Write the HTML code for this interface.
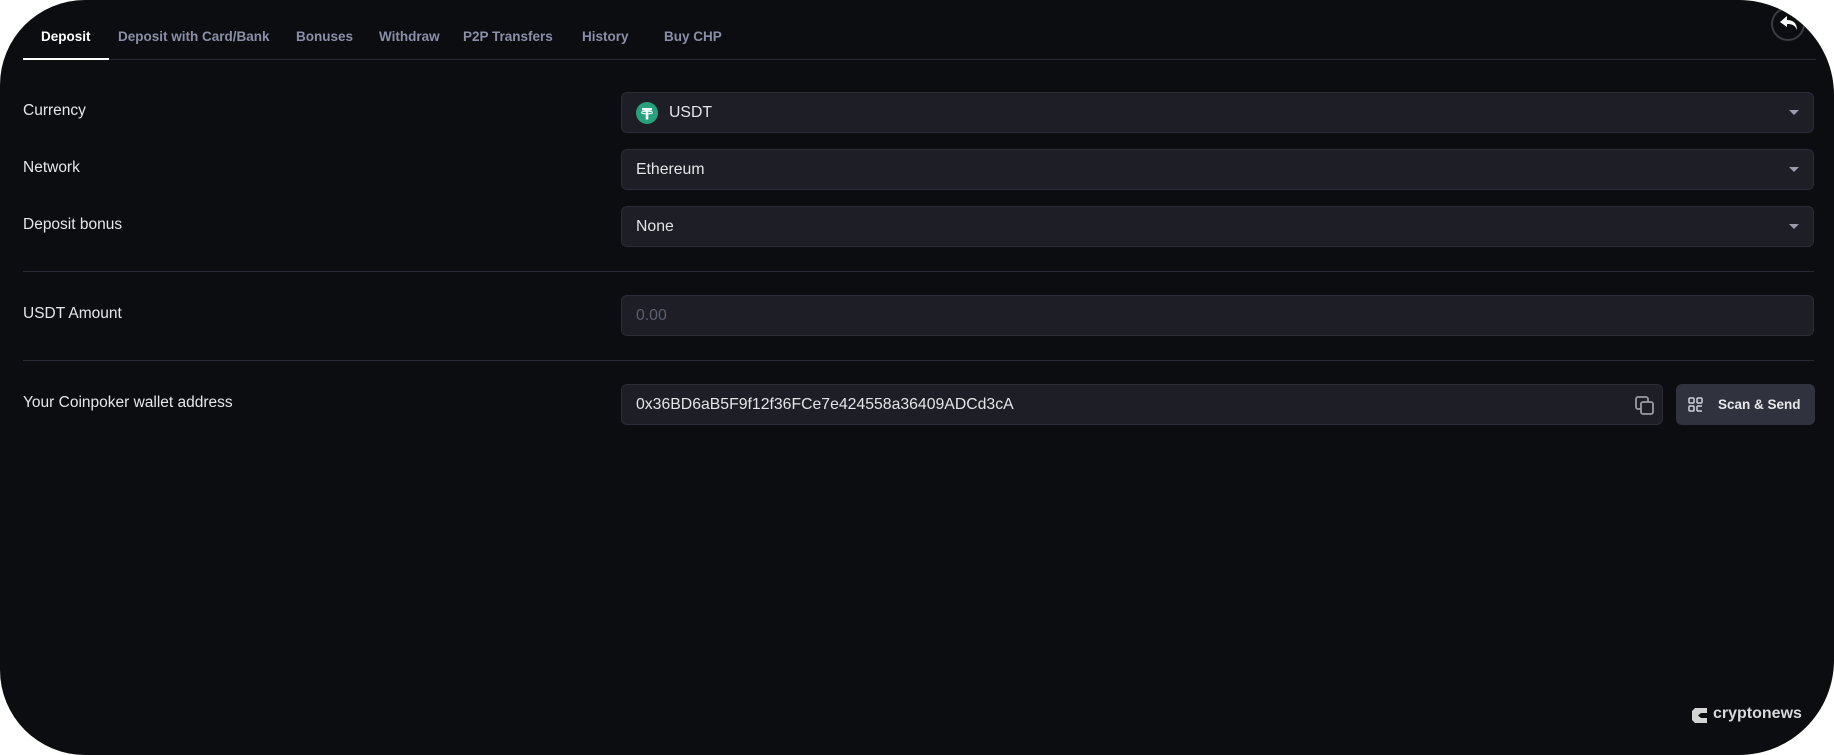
<!DOCTYPE html>
<html><head><style>
html,body{margin:0;padding:0;background:#fff;width:1834px;height:755px;overflow:hidden;font-family:"Liberation Sans",sans-serif}
.app{position:absolute;left:0;top:0;width:1834px;height:755px;background:#0c0d11;border-radius:85px 95px 95px 85px;overflow:hidden}
.tab{position:absolute;top:29px;font-size:13.5px;font-weight:bold;color:#8a8fa8}
.tab.on{color:#fff}
.lbl{position:absolute;left:23px;font-size:15.5px;color:#e6e7ea}
.box{position:absolute;left:621px;width:1193px;height:41px;background:#1d1e26;border:1px solid #2a2c36;border-radius:6px;color:#e4e5e8;font-size:15.8px;box-sizing:border-box}
.box span{position:absolute;left:14px;top:11px}
.arr{position:absolute;right:14px;top:17px;width:0;height:0;border-left:5px solid transparent;border-right:5px solid transparent;border-top:5px solid #9a9cab}
.hr{position:absolute;left:23px;right:20px;height:1px;background:#272932}
</style></head><body><div class="app">
<div class="tab on" style="left:41px">Deposit</div>
<div class="tab" style="left:118px">Deposit with Card/Bank</div>
<div class="tab" style="left:296px">Bonuses</div>
<div class="tab" style="left:379px">Withdraw</div>
<div class="tab" style="left:463px">P2P Transfers</div>
<div class="tab" style="left:582px">History</div>
<div class="tab" style="left:664px">Buy CHP</div>
<div class="hr" style="top:59px;left:23px;right:18px"></div>
<div style="position:absolute;left:23px;top:58px;width:86px;height:2px;background:#fff"></div>
<div style="position:absolute;left:1771px;top:7px;width:34px;height:34px;border:2px solid #3a3c44;border-radius:50%;box-sizing:border-box"></div>
<svg style="position:absolute;left:1778px;top:13px" width="22" height="20" viewBox="0 0 22 20"><path d="M9 3 L2 9 L9 14 L9 11 C14 11 17 12 19 17 C19 10 15 7 9 7 Z" fill="#fff"/></svg>

<div class="lbl" style="top:102px">Currency</div>
<div class="lbl" style="top:159px">Network</div>
<div class="lbl" style="top:216px">Deposit bonus</div>
<div class="lbl" style="top:305px">USDT Amount</div>
<div class="lbl" style="top:394px">Your Coinpoker wallet address</div>

<div class="box" style="top:92px"><svg style="position:absolute;left:14px;top:9px" width="22" height="22" viewBox="0 0 22 22"><circle cx="11" cy="11" r="11" fill="#26a17b"/><path d="M6 6h10v2.5h-3.7v9h-2.6v-9H6z" fill="#fff"/><ellipse cx="11" cy="10.5" rx="5.5" ry="1.4" fill="none" stroke="#fff" stroke-width="1"/></svg><span style="left:47px">USDT</span><div class="arr"></div></div>
<div class="box" style="top:149px"><span>Ethereum</span><div class="arr"></div></div>
<div class="box" style="top:206px"><span>None</span><div class="arr"></div></div>
<div class="hr" style="top:271px"></div>
<div class="box" style="top:295px"><span style="color:#5d6070">0.00</span></div>
<div class="hr" style="top:360px"></div>
<div class="box" style="top:384px;width:1042px"><span>0x36BD6aB5F9f12f36FCe7e424558a36409ADCd3cA</span>
<svg style="position:absolute;right:6px;top:10px" width="22" height="22" viewBox="0 0 22 22" fill="none" stroke="#9a9ca6" stroke-width="1.8"><rect x="2" y="2" width="12" height="12" rx="2"/><rect x="7" y="7" width="12" height="12" rx="2" fill="#1d1e26"/></svg></div>
<div style="position:absolute;left:1676px;top:384px;width:139px;height:41px;background:#30323d;border-radius:6px;color:#e8e9ec;font-size:13.5px;font-weight:bold">
<svg style="position:absolute;left:12px;top:13px" width="15" height="15" viewBox="0 0 15 15" fill="none" stroke="#cfd0d6" stroke-width="1.5"><rect x="1" y="1" width="5" height="5" rx="1"/><rect x="9" y="1" width="5" height="5" rx="1"/><rect x="1" y="9" width="5" height="5" rx="1"/><path d="M9 9h5M9 14h5M9 9v5"/></svg>
<span style="position:absolute;left:42px;top:13px">Scan &amp; Send</span></div>
<svg style="position:absolute;left:1691px;top:707px" width="17" height="17" viewBox="0 0 17 17"><path d="M4 1 H16 V6 H10 L7 8.5 L10 11 H16 V16 H4 L1 13 V4 Z" fill="#d4d4d6"/></svg>
<div style="position:absolute;left:1713px;top:705px;color:#d8d8da;font-size:16px;font-weight:bold">cryptonews</div>
</div></body></html>
